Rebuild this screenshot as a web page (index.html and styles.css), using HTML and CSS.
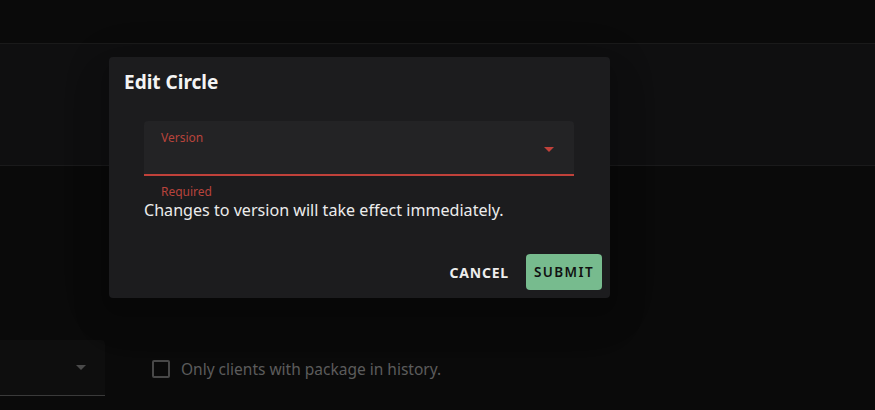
FILE: index.html
```html
<!DOCTYPE html>
<html lang="en">
<head>
<meta charset="utf-8">
<title>Edit Circle</title>
<link rel="stylesheet" href="styles.css">
</head>
<body>
<div class="page">
  <header class="appbar"></header>
  <section class="band"></section>
  <section class="filters">
    <div class="select-dim">
      <svg class="arrow" width="10" height="5" viewBox="0 0 10 5"><path d="M0 0h10L5 5z" fill="#4a4a4a"/></svg>
    </div>
    <label class="check">
      <span class="box"></span>
      <span class="check-text">Only clients with package in history.</span>
    </label>
  </section>
</div>

<div class="dialog" role="dialog">
  <h2 class="title">Edit Circle</h2>
  <div class="content">
    <div class="field">
      <span class="label">Version</span>
      <svg class="arrow" width="10" height="5" viewBox="0 0 10 5"><path d="M0 0h10L5 5z" fill="#c0413a"/></svg>
    </div>
    <div class="helper">Required</div>
    <p class="note">Changes to version will take effect immediately.</p>
  </div>
  <div class="actions">
    <button class="btn cancel">Cancel</button>
    <button class="btn submit">Submit</button>
  </div>
</div>
</body>
</html>
```
FILE: styles.css
```css
* { box-sizing: border-box; }
html, body { margin: 0; padding: 0; }
body {
  width: 875px;
  height: 410px;
  overflow: hidden;
  background: #0a0a0a;
  font-family: "Noto Sans", "Open Sans", sans-serif;
  position: relative;
}
.page { display: flex; flex-direction: column; height: 410px; }
.appbar { height: 44px; background: #0a0a0a; border-bottom: 1px solid #1a1a1a; }
.band { height: 122px; background: #0f0f10; border-bottom: 1px solid #1a1a1b; }
.filters {
  display: flex;
  align-items: center;
  gap: 47px;
  margin-top: 174px;
}
.select-dim {
  width: 105px;
  height: 56px;
  background: #0e0e0e;
  border-bottom: 1px solid #3a3a3a;
  border-top-right-radius: 4px;
  display: flex;
  align-items: center;
  justify-content: flex-end;
  padding-right: 19px;
}
.check { display: flex; align-items: center; gap: 11px; margin-top: 2px; }
.box {
  width: 18px; height: 18px;
  border: 2px solid #484848;
  border-radius: 2px;
}
.check-text { color: #5c5c5c; font-size: 15.5px; }

.dialog {
  position: absolute;
  left: 109px;
  top: 57px;
  width: 501px;
  height: 241px;
  background: #1c1c1e;
  border-radius: 4px;
  box-shadow: 0 11px 15px -7px rgba(0,0,0,0.15), 0 24px 38px 3px rgba(0,0,0,0.1), 0 9px 46px 8px rgba(0,0,0,0.08);
  display: flex;
  flex-direction: column;
}
.title {
  margin: 0;
  padding: 12px 15px 0;
  color: #f4f4f4;
  font-size: 19px;
  font-weight: 700;
  line-height: 26px;
}
.content { padding: 26px 36px 0 35px; }
.field {
  height: 55px;
  background: #232325;
  border-radius: 4px 4px 0 0;
  border-bottom: 2px solid #c0413a;
  padding: 9px 16px 0 17px;
  display: flex;
  justify-content: space-between;
}
.field .label { color: #b8433c; font-size: 12px; line-height: 16px; }
.field .arrow { margin-top: 17px; margin-right: 4px; }
.helper {
  color: #b8433c;
  font-size: 12px;
  line-height: 16px;
  padding: 8px 17px 0;
}
.note {
  margin: -1px 0 0;
  color: #ececec;
  font-size: 16.1px;
  line-height: 22px;
}
.actions {
  margin-top: auto;
  display: flex;
  justify-content: flex-end;
  align-items: center;
  gap: 9px;
  padding: 0 8px 8px;
}
.btn {
  font-family: inherit;
  font-size: 14px;
  font-weight: 700;
  letter-spacing: 0.8px;
  text-transform: uppercase;
  border: 0;
  border-radius: 4px;
  height: 36px;
  padding: 0 8px;
  background: none;
}
.cancel { color: #eeeeee; }
.submit { background: #77bb8e; color: #111; font-weight: 600; font-size: 13.5px; padding: 0 8px; letter-spacing: 1.4px; }
```
